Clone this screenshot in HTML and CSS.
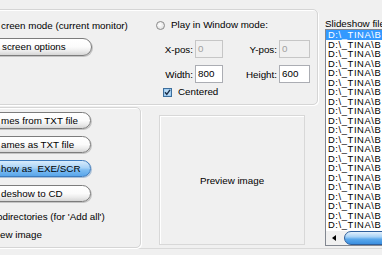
FILE: index.html
```html
<!DOCTYPE html>
<html lang="en">
<head>
  <meta charset="UTF-8">
  <meta name="viewport" content="width=device-width, initial-scale=1">
  <title>Slideshow</title>
  <link rel="stylesheet" href="styles.css">
</head>
<body>
  <div class="dialog">
    <div class="left-col">
      <div class="group top-group">
        <div class="full-mode">
          <div class="caption">creen mode (current monitor)</div>
          <div class="pill">screen options</div>
        </div>
        <div class="window-mode">
          <div class="radio-row"><span class="radio"></span>Play in Window mode:</div>
          <div class="fields">
            <span class="lbl">X-pos:</span><span class="input disabled">0</span>
            <span class="lbl">Y-pos:</span><span class="input disabled">0</span>
            <span class="lbl">Width:</span><span class="input">800</span>
            <span class="lbl">Height:</span><span class="input">600</span>
          </div>
          <div class="check-row">
            <svg class="check" width="9" height="9" viewBox="0 0 9 9">
              <rect x="0.5" y="0.5" width="8" height="8" fill="#8ec3ee" stroke="#3c6e9c"/>
              <rect x="1.5" y="1.5" width="6" height="6" fill="#b9dcf7"/>
              <path d="M2 4.3 L3.8 6.3 L7 1.8" fill="none" stroke="#1b2f4a" stroke-width="1.4"/>
            </svg>
            Centered
          </div>
        </div>
      </div>

      <div class="bottom-row">
        <div class="group tools-group">
          <div class="pill">mes from TXT file</div>
          <div class="pill">ames as TXT file</div>
          <div class="pill blue">how as &nbsp;EXE/SCR</div>
          <div class="pill last">deshow to CD</div>
          <div class="opt first-opt">bdirectories (for 'Add all')</div>
          <div class="opt">ew image</div>
        </div>
        <div class="preview">Preview image</div>
      </div>
    </div>

    <div class="right-col">
      <div class="list-label">Slideshow files:</div>
      <div class="listbox">
        <div class="items" id="items"></div>
        <div class="hscroll">
          <div class="arrow-btn"><span class="arrow"></span></div>
          <div class="thumb"></div>
        </div>
      </div>
    </div>
  </div>
  <div class="footer"></div>

  <script>
    const items = document.getElementById('items');
    for (let i = 0; i < 21; i++) {
      const row = document.createElement('div');
      row.className = i === 0 ? 'item selected' : 'item';
      row.textContent = 'D:\\_TINA\\B';
      items.appendChild(row);
    }
  </script>
</body>
</html>
```

FILE: styles.css
```css
* {
  box-sizing: border-box;
}

body {
  margin: 0;
  width: 382px;
  height: 255px;
  overflow: hidden;
  background-color: #f0f0f0;
  font-family: "Liberation Sans", Arial, sans-serif;
  font-size: 9.8px;
  color: #000;
}

.dialog {
  display: flex;
  height: 248px;
}

.left-col {
  flex: none;
  width: 330px;
  margin-left: -12px;
}

.group {
  border: 1px solid #d5d5d5;
  border-radius: 5px;
  box-shadow: inset 1px 1px 0 #fff, 1px 1px 0 #fff;
}

.top-group {
  margin-top: 9px;
  height: 96px;
  display: flex;
}

.full-mode {
  width: 167px;
  padding: 10px 0 0 12px;
}

.caption {
  line-height: 12px;
  white-space: nowrap;
}

.pill {
  height: 17px;
  line-height: 15px;
  margin-left: -26px;
  width: 117px;
  padding-left: 26px;
  border: 1px solid #7c7c7c;
  border-radius: 9px;
  background: linear-gradient(#ffffff, #fbfbfb 50%, #ececec 75%, #d6d6d6);
  box-shadow: 1px 1px 0 #c4c4c4;
  white-space: nowrap;
}

.full-mode .pill {
  margin-top: 6px;
  height: 18px;
  line-height: 16px;
}

.pill.blue {
  border-color: #3d7bbd;
  background: linear-gradient(#d9ecfc, #a9d3f7 45%, #7dbcf1 60%, #59a6ea);
  box-shadow: 1px 1px 0 #a9bfd6;
}

.window-mode {
  padding-top: 9px;
}

.radio-row {
  display: flex;
  align-items: center;
  line-height: 12px;
  white-space: nowrap;
}

.radio {
  width: 9px;
  height: 9px;
  margin-right: 6px;
  border: 1px solid #8a8a8a;
  border-radius: 50%;
  background: radial-gradient(circle at 40% 40%, #ffffff, #e4e4e4 70%, #cfcfcf);
}

.fields {
  display: grid;
  grid-template-columns: 33px 28px 56px 31px;
  grid-template-rows: 18px 18px;
  row-gap: 7px;
  margin: 9px 0 0 6px;
  align-items: center;
}

.lbl {
  justify-self: end;
  padding-right: 2px;
  white-space: nowrap;
}

.input {
  height: 18px;
  line-height: 16px;
  padding-left: 2px;
  border: 1px solid #abadb3;
  background-color: #fff;
}

.input.disabled {
  background-color: #f0f0f0;
  border-color: #c6c6c6;
  color: #a0a0a0;
}

.check-row {
  display: flex;
  align-items: center;
  margin: 3px 0 0 7px;
  line-height: 12px;
}

.check {
  margin-right: 6px;
}

.bottom-row {
  display: flex;
  margin-top: 2px;
}

.tools-group {
  width: 153px;
  height: 141px;
  padding: 4px 0 0 11px;
  display: flex;
  flex-direction: column;
  gap: 7px;
}

.tools-group .pill {
  margin-left: -37px;
  width: 128px;
  padding-left: 37px;
}

.tools-group .pill.last {
  margin-top: 1px;
}

.opt {
  line-height: 12px;
  white-space: nowrap;
}

.first-opt {
  margin: 2px 0 -1px -3px;
}

.preview {
  width: 146px;
  height: 130px;
  margin: 8px 0 0 18px;
  border: 1px solid #d8d8d8;
  box-shadow: inset 1px 1px 0 #fff;
  display: flex;
  align-items: center;
  justify-content: center;
}

.right-col {
  flex: none;
  width: 100px;
  margin-left: 7px;
}

.list-label {
  margin-top: 19px;
  line-height: 10px;
  white-space: nowrap;
}

.listbox {
  height: 217px;
  border: 1px solid #828790;
  background-color: #fff;
  display: flex;
  flex-direction: column;
  overflow: hidden;
}

.items {
  flex: 1;
  overflow: hidden;
}

.item {
  height: 9.5px;
  line-height: 9.5px;
  padding-left: 2px;
  font-size: 9.4px;
  letter-spacing: 0.6px;
  white-space: nowrap;
}

.item.selected {
  background-color: #3399ff;
  color: #fff;
}

.hscroll {
  height: 14px;
  display: flex;
  background-color: #f0f0f0;
}

.arrow-btn {
  width: 16px;
  display: flex;
  align-items: center;
  justify-content: center;
}

.arrow {
  width: 0;
  height: 0;
  border-top: 3px solid transparent;
  border-bottom: 3px solid transparent;
  border-right: 4px solid #000;
}

.thumb {
  flex: 1;
  margin: 0 0 0 2px;
  border: 1px solid #2e5f9c;
  border-radius: 7px 0 0 7px;
  background: linear-gradient(#e3f1fd, #a7d2f6 40%, #5aa8ec 60%, #3b8fe0);
}

.footer {
  height: 7px;
  border-top: 1px solid #d9d9d9;
  background-color: #f0f0f0;
}
```
